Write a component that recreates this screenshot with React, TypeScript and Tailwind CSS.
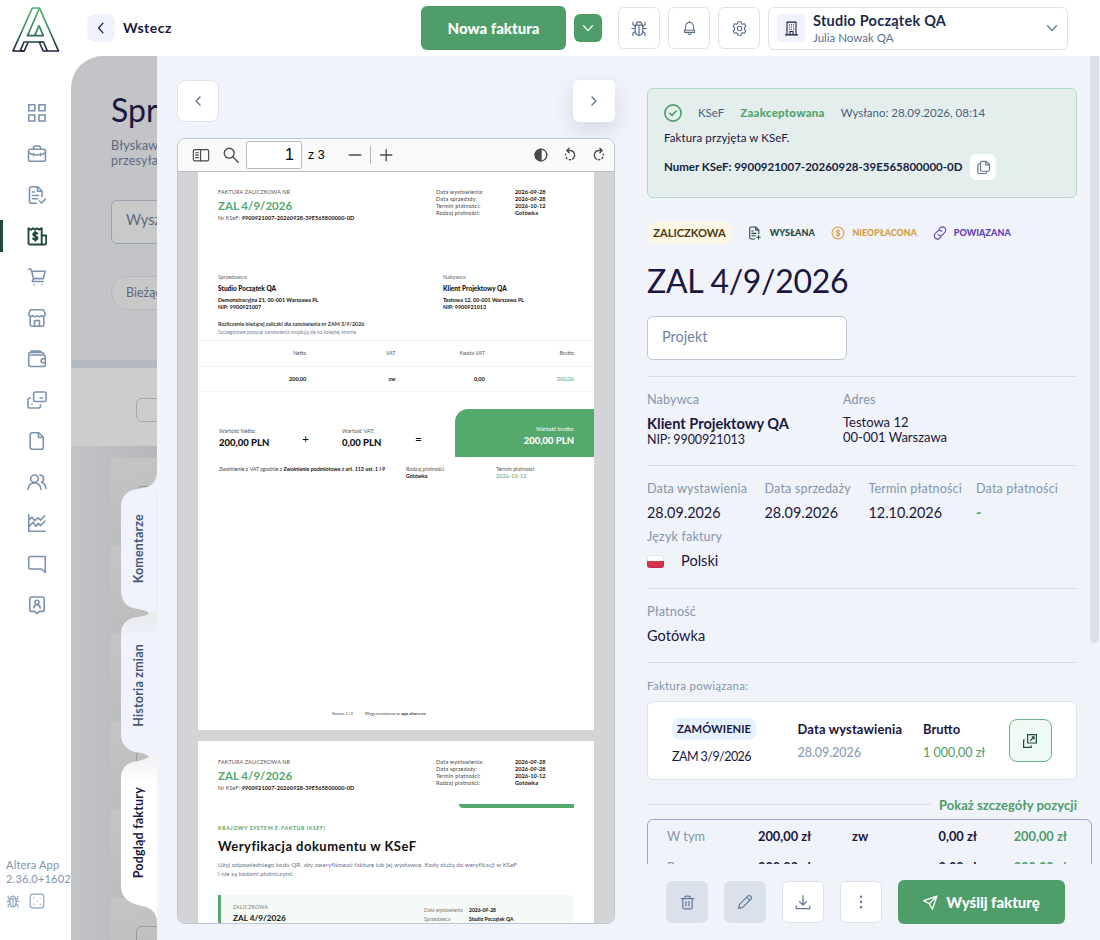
import type { ReactNode } from 'react';
import clsx from 'clsx';

interface IconProps {
  children: ReactNode;
  className?: string;
  strokeWidth?: number;
}

function Icon({ children, className = '', strokeWidth = 1.5 }: IconProps) {
  return (
    <svg
      className={clsx('shrink-0', className)}
      viewBox="0 0 20 20"
      fill="none"
      stroke="currentColor"
      strokeWidth={strokeWidth}
      strokeLinecap="round"
      strokeLinejoin="round"
    >
      {children}
    </svg>
  );
}

const bugPaths = (
  <>
    <path d="M6.2 7.2h7.6v5.3c0 2.8-1.6 4.8-3.8 4.8s-3.8-2-3.8-4.8z" />
    <path d="M7 7c.1-2 1.3-3.2 3-3.2S12.9 5 13 7M10 7.5V17M6 10.5H2.8M17.2 10.5H14M6.2 8.3 4 6.8V4M13.8 8.3 16 6.8V4M6.5 13.5 4 15v2.5M13.5 13.5 16 15v2.5" />
  </>
);

const navIcons: ReactNode[] = [
  <path key="dashboard" strokeLinejoin="miter" d="M1.8 1.8h6v6h-6zM12 1.8h6v6h-6zM1.8 12h6v6h-6zM12 12h6v6h-6z" />,
  <path key="briefcase" d="M3.5 5.2h13a2 2 0 0 1 2 2v8a2 2 0 0 1-2 2h-13a2 2 0 0 1-2-2v-8a2 2 0 0 1 2-2zM6.500 5V4a2 2 0 0 1 2-2h3a2 2 0 0 1 2 2v1M1.700 8.500c1.400 1.300 3 2 5 2.200M18.300 8.500c-1.400 1.300-3 2-5 2.200M8.500 10.700h3M6.700 9.500v2.300M13.300 9.500v2.300" />,
  <path key="doc-check" d="M9.500 18.200h-5a2 2 0 0 1-2-2V3.800a2 2 0 0 1 2-2h6.300L15 6v5.500M10.500 2v4.300H15M5.500 7h2M5.500 10.500h6M5.500 13.800h5M12.500 16l2 2 4-4" />,
  <g key="invoice">
    <path d="M1.500 2.200 4 3.700l2-1.500 2 1.500 2-1.500 2 1.500 2.700-1.500v16.300H3a1.500 1.500 0 0 1-1.500-1.500z" />
    <path d="M14.700 9.500h4.500v7.200a1.800 1.800 0 0 1-1.800 1.800h-2.700M10.300 7.600c-.5-.6-1.200-.8-2-.8-1.200 0-2.100.6-2.100 1.600 0 2.400 4.300 1.200 4.300 3.600 0 1-1 1.600-2.200 1.600-.9 0-1.700-.3-2.200-1M8.300 5.700v9" />
  </g>,
  <path key="cart" d="M1.500 2h2.200l1 2.300 1.800 7.300h9.800M4.700 4.300h13.500l-2 7.300M6.500 11.600l-1.300 2.900h11M7 17.800h.1M15 17.800h.1" />,
  <path key="store" d="M3.500 1.800h13l1.800 4.500a2.500 2.500 0 0 1-4.100 1.400 3 3 0 0 1-4.200 0 3 3 0 0 1-4.200 0A2.500 2.500 0 0 1 1.700 6.300zM3.200 8.500v8a1.700 1.700 0 0 0 1.700 1.700h10.200a1.700 1.700 0 0 0 1.700-1.700v-8M7.500 18v-5.500h5V18" />,
  <path key="wallet" d="M16.800 6v-.5a2 2 0 0 0-2-2H3.300A1.600 1.600 0 0 0 1.700 5v10.500a2 2 0 0 0 2 2h12.600a2 2 0 0 0 2-2V8a2 2 0 0 0-2-2H3.300M18.300 9.800h-2.200a2 2 0 0 0 0 4h2.200M14.300 3.500c0-.9-.7-1.500-1.500-1.500H4" />,
  <path key="cards" d="M8.200 2h9.300a1.600 1.600 0 0 1 1.600 1.600v6.300a1.600 1.600 0 0 1-1.600 1.600H8.200a1.600 1.600 0 0 1-1.600-1.600V3.600A1.600 1.600 0 0 1 8.200 2zM13 8h2.500M3.300 8H2.600A1.700 1.700 0 0 0 1 9.700v6.600A1.700 1.700 0 0 0 2.700 18h9a1.700 1.700 0 0 0 1.700-1.700v-1.500M4.800 14.300h.2" />,
  <path key="file" d="M5.200 1.800h6.600l4.500 4.400v10a2 2 0 0 1-2 2H5.200a2 2 0 0 1-2-2V3.800a2 2 0 0 1 2-2zM11.500 2v4.500h4.700" />,
  <path key="users" d="M7.500 3a3.800 3.800 0 1 1 0 7.600 3.800 3.800 0 0 1 0-7.600zM1 17.500c.4-4 3-6.500 6.500-6.500s6.100 2.500 6.500 6.500M13 3a3.800 3.800 0 0 1 1.500 7.200c2.500.8 4.200 3 4.500 6.300" />,
  <path key="chart" d="M1.800 1.800v16.400h16.400M2 13.500l4.200-4.300 2.500 4.200 2.700-3 2.100 2.200L18 8M2 6.800l3-2.600 2.800 3.500L11 4.800l2.500 2.400 4.300-4.400" />,
  <path key="chat" d="M18.300 18.500l-4-3.500H3.500a1.800 1.800 0 0 1-1.800-1.800V4.300a1.800 1.800 0 0 1 1.800-1.800h14.800z" />,
  <g key="contact">
    <path d="M4.500 2h11A1.700 1.700 0 0 1 17.200 3.700v11a1.700 1.700 0 0 1-1.700 1.700h-3.300L10 18.700l-2.200-2.300H4.500a1.700 1.700 0 0 1-1.700-1.700v-11A1.700 1.700 0 0 1 4.500 2z" />
    <path d="M10 5.300a2 2 0 1 1 0 4 2 2 0 0 1 0-4zM6.800 13c.3-2.200 1.500-3.400 3.200-3.400s2.900 1.200 3.200 3.400" />
  </g>,
];

const chevronDown = <path d="M4.500 7.2l5.500 6 5.500-6" />;

function Logo() {
  return (
    <svg className="h-[46px] w-12" viewBox="0 0 48 46" fill="none" strokeWidth="1.7" strokeLinejoin="round">
      <defs>
        <linearGradient id="logo" x1="0" y1="0" x2="0" y2="46" gradientUnits="userSpaceOnUse">
          <stop offset="0" stopColor="#55b070" />
          <stop offset=".5" stopColor="#3d8a63" />
          <stop offset=".75" stopColor="#1f4d45" />
          <stop offset="1" stopColor="#201a44" />
        </linearGradient>
      </defs>
      <g stroke="url(#logo)">
        <path d="M1 44 20.3 1h7.2L46.500 44H35.300l-3.800-9H16.200l-4 9z" />
        <path d="M27.500 1 15.500 28.700h15.800L27 18.700l-4.300 10M16.200 35h-5M31.500 35h-4.300l4 9h4.100M12.200 44l-4-.1L12 35" />
      </g>
    </svg>
  );
}

function Header() {
  return (
    <header className="flex h-14 shrink-0 items-center bg-white">
      <div className="mt-1 ml-3">
        <Logo />
      </div>
      <button className="ml-[27px] flex size-7 items-center justify-center rounded-lg bg-[#f0f3fb] text-[#1b1740]">
        <Icon className="size-4"><path d="M12.5 4 7 10l5.5 6" /></Icon>
      </button>
      <span className="ml-2 text-sm font-bold tracking-[0.5px]">Wstecz</span>
      <button className="ml-auto h-11 w-[145px] rounded-md bg-[#4f9d69] text-[15px] font-black text-white">
        Nowa faktura
      </button>
      <button className="ml-2 flex size-7 items-center justify-center rounded-md bg-[#4f9d69] text-white">
        <Icon className="size-4">{chevronDown}</Icon>
      </button>
      <div className="ml-4 flex gap-2 text-[#5b6f8f]">
        <button className="flex size-[42px] items-center justify-center rounded-md border border-[#dde2ea]">
          <Icon className="size-5" strokeWidth={1.2}>{bugPaths}</Icon>
        </button>
        <button className="flex size-[42px] items-center justify-center rounded-md border border-[#dde2ea]">
          <Icon className="size-[17px]" strokeWidth={1.3}>
            <path d="M10 2.8a4.700 4.700 0 0 0-4.700 4.700v3.200L4 12.800v1.700h12v-1.700l-1.300-2.100V7.500A4.700 4.700 0 0 0 10 2.800zM10 1.500v1.300M5 12h10M8 15c.2 1.500.9 2.300 2 2.300s1.800-.8 2-2.300" />
          </Icon>
        </button>
        <button className="flex size-[42px] items-center justify-center rounded-md border border-[#dde2ea]">
          <Icon className="size-[17px]" strokeWidth={1.3}>
            <path d="M8.300 2h3.400l.5 2.100 1.500.9 2.100-.7 1.700 3-1.600 1.500v2.400l1.600 1.500-1.700 3-2.100-.7-1.500.9-.5 2.100H8.300l-.5-2.100-1.500-.9-2.100.7-1.700-3 1.600-1.500V8.800L2.500 7.300l1.700-3 2.100.7 1.500-.9z" />
            <circle cx="10" cy="10" r="2.6" />
          </Icon>
        </button>
      </div>
      <button className="mr-8 ml-2 flex h-[43px] w-[300px] items-center rounded-md border border-[#dde2ea] pr-[7px] pl-2 text-left">
        <span className="flex size-7 items-center justify-center rounded bg-[#f0f3fb] text-[#1b1740]">
          <Icon className="size-[15px]" strokeWidth={1.4}>
            <path d="M2 18.500h16M4 18.500v-17h12v17M8 18.500V14h4v4.500M7.300 5h.1M10 5h.1M12.700 5h.1M7.300 8h.1M10 8h.1M12.700 8h.1M7.300 11h.1M10 11h.1M12.700 11h.1" />
          </Icon>
        </span>
        <span className="ml-2 flex flex-1 flex-col">
          <span className="text-[14.5px] leading-[18px] font-bold tracking-[0.25px] text-[#1c2b4a]">Studio Początek QA</span>
          <span className="text-[11.5px] leading-[15px] text-[#5b6f8f]">Julia Nowak QA</span>
        </span>
        <Icon className="size-4 text-[#5b6f8f]">{chevronDown}</Icon>
      </button>
    </header>
  );
}

function Sidebar() {
  return (
    <aside className="flex w-[71px] shrink-0 flex-col bg-white text-[#7c92b0]">
      <nav className="flex flex-col pt-9">
        {navIcons.map((icon, i) => (
          <div key={i} className={clsx('flex h-[41px] items-center', i === 3 && 'text-[#1f4a3f]')}>
            <span className={clsx('h-8 w-[3px]', i === 3 && 'bg-[#1f4a3f]')} />
            <Icon className="ml-6 size-5" strokeWidth={i === 3 ? 1.9 : 1.6}>{icon}</Icon>
          </div>
        ))}
      </nav>
      <div className="mt-auto pb-[31px] pl-1.5 text-[11px] leading-[14px] tracking-[0.2px] whitespace-nowrap">
        <p>Altera App</p>
        <p>2.36.0+1602</p>
        <div className="mt-[7px] -ml-px flex gap-2 text-[#8fa6c0]">
          <Icon className="size-4">{bugPaths}</Icon>
          <Icon className="size-4">
            <rect x="1.5" y="1.5" width="17" height="17" rx="3" />
            <path d="M6 6h.1M14 6h.1M10 10h.1M6 14h.1M14 14h.1" />
          </Icon>
        </div>
      </div>
    </aside>
  );
}

function Backdrop() {
  return (
    <div className="flex w-[86px] shrink-0 flex-col overflow-hidden rounded-tl-[32px] bg-[#c2c4c8]">
      <div className="flex h-[304px] w-[400px] shrink-0 flex-col items-start pl-10">
        <h1 className="mt-8 text-[32px] leading-[44px]">Sprzedaż</h1>
        <p className="mt-1.5 text-[12.5px] leading-[15px] tracking-[0.2px] text-[#5d6880]">
          Błyskawicznie
          <br />
          przesyłaj
        </p>
        <div className="mt-8 flex h-11 w-60 items-center rounded-md border border-[#9aa3b0] bg-[#c9c9ca] pb-1 pl-3.5 text-[14.5px] text-[#5d6880]">
          Wyszukaj
        </div>
        <div className="mt-8 flex h-[34px] w-60 items-center rounded-full border border-[#b5b8bc] bg-[#c8c8c8] pl-3.5 text-[12.5px] text-[#5d6880]">
          Bieżący
        </div>
      </div>
      <div className="h-2 w-[400px] shrink-0 rounded-full bg-[#b3b9be]" />
      <div className="h-[78px] shrink-0 bg-[#cdcdcc] pt-[30px] pl-[65px]">
        <div className="h-6 w-8 rounded-md border border-[#a4a8b5]" />
      </div>
      <div className="flex flex-1 flex-col gap-2 overflow-hidden bg-linear-to-r from-[#c2c4c8] to-[#b5b7ba] pt-3 pl-[39px]">
        {[1, 2, 3, 4, 5, 6].map((n) => (
          <div key={n} className="h-20 w-60 shrink-0 rounded-md bg-linear-to-br from-[#c5c5c5] to-[#b4b5b6] pt-7 pl-[26px]">
            <div className="h-6 w-8 rounded-md border border-[#9699a0]" />
          </div>
        ))}
      </div>
    </div>
  );
}

const tabs = [
  { label: 'Komentarze', height: 'h-[158px]', className: 'text-[#435777]' },
  { label: 'Historia zmian', height: 'h-[114px]', className: 'text-[#435777]' },
  { label: 'Podgląd faktury', height: 'h-[182px]', className: 'text-[#1b1740]' },
];

// Side tabs hang off the drawer's left edge, over the dimmed page
function DrawerTabs() {
  return (
    <div className="absolute top-[414px] -left-9 flex w-9 flex-col">
      <svg className="absolute inset-0 h-[455px] w-9" viewBox="0 0 36 455">
        <defs>
          <linearGradient id="tab-history" x1="0" y1="0" x2="0" y2="1">
            <stop offset=".03" stopColor="#e9ebef" />
            <stop offset=".2" stopColor="#f0f3fb" />
          </linearGradient>
          <linearGradient id="tab-preview" x1="0" y1="0" x2="0" y2="1">
            <stop offset=".03" stopColor="#f1f1f4" />
            <stop offset=".16" stopColor="#ffffff" />
          </linearGradient>
        </defs>
        <path fill="#f0f3fb" d="M36 0C36 12 31 17 19 18.5C7 19.5 0 26 0 36V121C0 131 6 138 17 139C23 140 26 141 28 143L36 145Z" />
        <path fill="url(#tab-history)" d="M36 141L28 143C25 146 22 146 17 147C6 148 0 154 0 164V264C0 274 6 281 17 282.5C23 283 26 285 28 286.5L36 288Z" />
        <path fill="url(#tab-preview)" d="M36 284L28 286.5C25 289 22 290 17 291C6 292 0 298 0 308V416C0 426 7 433 17 435C30 437 36 442 36 453Z" />
        <path stroke="#d5dce6" d="M36 19v120" />
      </svg>
      {tabs.map(({ label, height, className }) => (
        <div key={label} className={clsx('flex items-center justify-center', height)}>
          <span className={clsx('relative rotate-180 text-[12.5px] font-bold tracking-[0.2px] whitespace-nowrap [writing-mode:vertical-rl]', className)}>
            {label}
          </span>
        </div>
      ))}
    </div>
  );
}

const pdfDates = [
  ['Data wystawienia:', '2026-09-28'],
  ['Data sprzedaży:', '2026-09-28'],
  ['Termin płatności:', '2026-10-12'],
  ['Rodzaj płatności:', 'Gotówka'],
];

function PdfHeading() {
  return (
    <div className="flex h-[53px] pt-[17px] pl-5">
      <div className="w-[218px]">
        <p className="leading-[7px] tracking-[0.1px] text-[#555]">FAKTURA ZALICZKOWA NR</p>
        <p className="mt-[2.5px] text-[11.5px] leading-[13px] font-bold text-[#55a86b]">ZAL 4/9/2026</p>
        <p className="mt-[3px] leading-[7px] tracking-[0.1px]">
          <span className="text-[#555]">Nr KSeF: </span>
          <b>9900921007-20260928-39E565800000-0D</b>
        </p>
      </div>
      <div className="leading-[7px]">
        {pdfDates.map(([label, value]) => (
          <div key={label} className="flex">
            <span className="w-[79px] tracking-[0.2px] text-[#444]">{label}</span>
            <b className="tracking-[0.1px]">{value}</b>
          </div>
        ))}
      </div>
    </div>
  );
}

function PdfParty({ role, name, address, nip }: { role: string; name: string; address: string; nip: string }) {
  return (
    <div className="w-[225px] shrink-0 leading-[7px]">
      <p className="text-[5.4px] text-[#666]">{role}</p>
      <p className="mt-1 text-[6.5px] font-black">{name}</p>
      <p className="mt-[5px] text-[5.4px] font-bold">{address}</p>
      <p className="text-[5.4px] font-bold">{nip}</p>
    </div>
  );
}

function PdfPages() {
  return (
    <div className="flex flex-1 flex-col gap-[11px] overflow-hidden bg-[#d4d4d6] px-5 text-[5.5px] text-[#111]">
      <div className="flex h-[558px] shrink-0 flex-col bg-white">
        <PdfHeading />
        <div className="mt-[49px] flex pl-5">
          <PdfParty role="Sprzedawca:" name="Studio Początek QA" address="Demonstracyjna 21, 00-001 Warszawa PL" nip="NIP: 9900921007" />
          <PdfParty role="Nabywca:" name="Klient Projektowy QA" address="Testowa 12, 00-001 Warszawa PL" nip="NIP: 9900921013" />
        </div>
        <div className="mt-[9px] pl-5 text-[5.3px] leading-2">
          <p className="font-bold text-[#333]">Rozliczenie bieżącej zaliczki dla zamówienia nr ZAM 3/9/2026</p>
          <p className="text-[4.9px] text-[#7a8194]">Szczegółowe pozycje zamówienia znajdują się na kolejnej stronie</p>
        </div>
        <div className="mt-1 grid h-[26px] grid-cols-4 items-center border-t border-[#f3f3f6] pr-5 pl-[19px] text-right text-[5.2px] text-[#555]">
          <span>Netto</span>
          <span>VAT</span>
          <span>Kwota VAT</span>
          <span>Brutto</span>
        </div>
        <div className="grid h-[26px] grid-cols-4 items-center border-y border-[#f3f3f6] pr-5 pl-[19px] text-right font-bold">
          <span>200,00</span>
          <span>zw</span>
          <span>0,00</span>
          <span className="font-normal text-[#4f9d69]">200,00</span>
        </div>
        <div className="mt-[17px] flex h-12 pl-[21px]">
          <div className="w-[83px] pt-[19px]">
            <p className="leading-[7px] text-[#555]">Wartość Netto:</p>
            <p className="mt-[3px] text-[9.5px] leading-[9px] font-black">200,00 PLN</p>
          </div>
          <span className="w-10 pt-[23px] text-[12px] leading-[13px]">+</span>
          <div className="w-[73px] pt-[19px]">
            <p className="leading-[7px] text-[#555]">Wartość VAT:</p>
            <p className="mt-[3px] text-[9.5px] leading-[9px] font-black">0,00 PLN</p>
          </div>
          <span className="w-10 pt-[23px] text-[12px] leading-[13px]">=</span>
          <div className="flex-1 rounded-tl-[13px] bg-[#55a96c] pt-[17px] pr-5 text-right text-white">
            <p className="leading-[7px]">Wartość brutto:</p>
            <p className="mt-[3px] text-[9.5px] leading-[9px] font-black">200,00 PLN</p>
          </div>
        </div>
        <div className="mt-[9px] flex pl-[21px] text-[5.3px] leading-[7px] whitespace-nowrap">
          <p className="w-[187px]">
            <span className="text-[#444]">Zwolnienie z VAT zgodnie z </span>
            <b>Zwolnienie podmiotowe z art. 113 ust. 1 i 9</b>
          </p>
          <div className="w-[90px]">
            <p className="text-[#555]">Rodzaj płatności</p>
            <b>Gotówka</b>
          </div>
          <div>
            <p className="text-[#555]">Termin płatności</p>
            <p className="tracking-[0.2px] text-[#4f9d69]">2026-10-12</p>
          </div>
        </div>
        <div className="mt-auto flex gap-3 pb-[13px] pl-[134px] text-[4.4px] leading-[6px] text-[#444]">
          <span>Strona 1/3</span>
          <span>
            Wygenerowano w <b>app.altera.co</b>
          </span>
        </div>
      </div>

      <div className="h-[400px] shrink-0 bg-white pt-px">
        <PdfHeading />
        <div className="mt-[9px] mr-5 ml-[261px] h-1 rounded-bl bg-[#55a96c]" />
        <p className="mt-4 pl-5 text-[5.3px] leading-2 font-bold tracking-[0.55px] text-[#4f9d69]">KRAJOWY SYSTEM E-FAKTUR (KSEF)</p>
        <h2 className="mt-[5.5px] pl-5 text-[13px] leading-4 font-bold tracking-[0.48px]">Weryfikacja dokumentu w KSeF</h2>
        <p className="mt-1.5 pl-5 text-[6.2px] leading-[9px] tracking-[0.06px] text-[#6c738a]">
          Użyj odpowiedniego kodu QR, aby zweryfikować fakturę lub jej wystawcę. Kody służą do weryfikacji w KSeF
          <br />i nie są kodami płatniczymi.
        </p>
        <div className="mt-[17.5px] mr-5 ml-5 flex h-[100px] rounded-tr-md border-l-[3px] border-[#55a96c] bg-[#f5faf6] pt-[9px] pl-3 text-[5px]">
          <div className="w-[191px]">
            <p className="leading-[7px] tracking-[0.3px] text-[#777]">ZALICZKOWA</p>
            <p className="mt-[3px] text-[8.2px] leading-[9px] font-bold">ZAL 4/9/2026</p>
          </div>
          <div className="pt-0.5 leading-[9px]">
            <p className="flex">
              <span className="w-[45px] text-[#777]">Data wystawienia</span>
              <b>2026-09-28</b>
            </p>
            <p className="flex">
              <span className="w-[45px] text-[#777]">Sprzedawca</span>
              <b>Studio Początek QA</b>
            </p>
          </div>
        </div>
      </div>
    </div>
  );
}

function PdfToolbar() {
  return (
    <div className="flex h-[33px] shrink-0 items-center border-b border-[#b9bdc4] bg-[#f9f9fa] text-[#4a4a4d]">
      <Icon className="ml-[14px] size-[18px]" strokeWidth={1.3}>
        <rect x="1.5" y="4" width="17" height="12.5" rx="1.5" />
        <path d="M9.5 4v12.5M4 7.5h3M4 10.2h3M4 13h3" />
      </Icon>
      <Icon className="ml-3 size-[18px]">
        <circle cx="8" cy="8" r="5.5" />
        <path d="M12 12l6 6" />
      </Icon>
      <div className="ml-1.5 flex h-7 w-14 items-center justify-end rounded-xs border border-[#bbb] bg-white pr-[7px] font-['Liberation_Sans'] text-base text-black">
        1
      </div>
      <span className="ml-1.5 font-['Liberation_Sans'] text-[12.5px] text-black">z 3</span>
      <Icon className="ml-[21px] size-[18px]" strokeWidth={1.4}><path d="M3.5 10h13" /></Icon>
      <div className="ml-1.5 h-[18px] w-px bg-[#b5b5b5]" />
      <Icon className="ml-1.5 size-[18px]" strokeWidth={1.5}><path d="M4 10h12.500M10.200 4v12.500" /></Icon>
      <Icon className="ml-auto size-[18px]">
        <circle cx="10" cy="10" r="6.5" />
        <path fill="currentColor" d="M10 3.5a6.500 6.500 0 0 0 0 13z" />
      </Icon>
      <Icon className="ml-[11px] size-[18px]">
        <path d="M9 2.5 6.500 5 9 7.500M6.800 5H10a5.200 5.200 0 0 1 2.500 9.700" />
        <path strokeDasharray="1.5 2.6" d="M10.500 15.300A5.200 5.200 0 0 1 5.200 9" />
      </Icon>
      <Icon className="mr-1.5 ml-[11px] size-[18px]">
        <path d="M11 2.5 13.500 5 11 7.500M13.200 5H10a5.200 5.200 0 0 0-2.500 9.700" />
        <path strokeDasharray="1.5 2.6" d="M9.500 15.300A5.200 5.200 0 0 0 14.800 9" />
      </Icon>
    </div>
  );
}

function Preview() {
  return (
    <section className="flex w-[438px] shrink-0 flex-col pt-6 pb-4">
      <div className="flex justify-between text-[#64748b]">
        <button className="flex size-[42px] items-center justify-center rounded-lg border border-[#dde2ea] bg-white">
          <Icon className="size-4" strokeWidth={1.7}><path d="M12.5 5 7.500 10l5 5" /></Icon>
        </button>
        <button className="flex size-[42px] items-center justify-center rounded-md bg-white shadow-[0_8px_20px_rgba(60,70,100,0.15)]">
          <Icon className="size-4" strokeWidth={1.7}><path d="M7.5 5l5 5-5 5" /></Icon>
        </button>
      </div>
      <div className="mt-4 flex flex-1 flex-col overflow-hidden rounded-lg border border-[#bcc8d6]">
        <PdfToolbar />
        <PdfPages />
      </div>
    </section>
  );
}

function Label({ children }: { children: ReactNode }) {
  return <p className="-mt-px mb-px text-[12.6px] leading-4 tracking-[0.15px] text-[#8296af]">{children}</p>;
}

const dates = [
  { label: 'Data wystawienia', value: '28.09.2026', width: 'w-[101.5px]' },
  { label: 'Data sprzedaży', value: '28.09.2026', width: 'w-[88px]' },
  { label: 'Termin płatności', value: '12.10.2026', width: 'w-[91.5px]' },
  { label: 'Data płatności', value: '-', width: 'w-[90px]' },
];

const totals = [
  { label: 'W tym', net: '200,00 zł', rate: 'zw', vat: '0,00 zł', gross: '200,00 zł' },
  { label: 'Razem', net: '200,00 zł', rate: '', vat: '0,00 zł', gross: '200,00 zł' },
];

function Details() {
  return (
    <div className="flex min-h-0 flex-1 flex-col overflow-hidden">
      <div className="w-[430px] shrink-0">
        <div className="mt-8 h-[110px] rounded-md border border-[#b5d8c8] bg-[#e4eeed] px-4 pt-[14px]">
          <div className="flex h-[19px] items-center gap-4 text-[11.5px] text-[#4a5f80]">
            <Icon className="size-[18px] text-[#4f9d69]" strokeWidth={1.8}>
              <circle cx="10" cy="10" r="9" />
              <path d="M6.5 10.300l2.500 2.300 4.500-4.800" />
            </Icon>
            <span>KSeF</span>
            <span className="font-black tracking-[0.25px] text-[#4fa56c]">Zaakceptowana</span>
            <span>Wysłano: 28.09.2026, 08:14</span>
          </div>
          <p className="mt-[9px] text-[11.5px] leading-[14px] tracking-[0.1px] text-[#1b1740]">Faktura przyjęta w KSeF.</p>
          <div className="mt-[9px] flex items-center">
            <span className="text-[11.5px] font-bold text-[#16233f]">Numer KSeF: 9900921007-20260928-39E565800000-0D</span>
            <button className="ml-2 flex size-[26px] items-center justify-center rounded-md bg-white text-[#64789a]">
              <Icon className="size-[15px]" strokeWidth={1.6}>
                <path d="M8 1.800h5.500L18 6v7a2 2 0 0 1-2 2H8a2 2 0 0 1-2-2V3.800a2 2 0 0 1 2-2zM13 2v4.500h4.800M6 5H4.500a2 2 0 0 0-2 2v9a2 2 0 0 0 2 2H12a2 2 0 0 0 2-2v-1" />
              </Icon>
            </button>
          </div>
        </div>

        <div className="mt-6 flex h-[22px] items-center text-[9px] font-black tracking-[0.1px]">
          <span className="flex h-[22px] w-[85px] items-center justify-center rounded-lg bg-[#fdf8e6] text-[11.2px] font-bold tracking-[-0.05px] text-[#4a3a10]">
            ZALICZKOWA
          </span>
          <span className="ml-4 flex w-[67px] items-center justify-between text-[#1f4a3f]">
            <Icon className="size-[14px]">
              <path d="M9.5 18.500h-5a2 2 0 0 1-2-2v-13a2 2 0 0 1 2-2h6.800L15.500 6v5M11 1.800V6h4.500M5.500 7h2M5.500 10.500h6M5.500 14h5M15 13.500v5M12.500 16h5" />
            </Icon>
            WYSŁANA
          </span>
          <span className="ml-4 flex w-[86px] items-center justify-between text-[8.8px] text-[#db9a3c]">
            <Icon className="size-[14px]">
              <circle cx="10" cy="10" r="8.5" />
              <path d="M12.3 7.500c-.5-.8-1.300-1.200-2.300-1.200-1.400 0-2.300.7-2.300 1.700 0 2.600 4.800 1.300 4.800 4 0 1.100-1.100 1.800-2.500 1.800-1.100 0-2-.4-2.500-1.200M10 4.800v10.400" />
            </Icon>
            NIEOPŁACONA
          </span>
          <span className="ml-4 flex w-[78px] items-center justify-between text-[#6540b5]">
            <Icon className="size-[14px]">
              <path d="M8.5 4.500l1.800-1.800a4.400 4.400 0 0 1 6.500 0 4.500 4.500 0 0 1 0 6.500l-3 3a4.400 4.400 0 0 1-6.200.2M11.500 15.500l-1.800 1.800a4.400 4.400 0 0 1-6.500 0 4.500 4.500 0 0 1 0-6.500l3-3a4.400 4.400 0 0 1 6.200-.2" />
            </Icon>
            POWIĄZANA
          </span>
        </div>

        <h1 className="mt-[17px] text-[32px] leading-10 tracking-[-0.3px]">ZAL 4/9/2026</h1>
        <div className="mt-[15px] flex h-11 w-[200px] items-center rounded-md border border-[#bcc8d6] bg-white px-3.5 pb-0.5 text-[14.5px] text-[#6f84a2]">
          Projekt
        </div>

        <div className="mt-4 flex h-[89px] border-t border-[#d8dee8] pt-4">
          <div className="w-[196px]">
            <Label>Nabywca</Label>
            <p className="mt-[7px] text-[14.6px] leading-[18px] font-bold">Klient Projektowy QA</p>
            <p className="text-[12.5px] leading-[14px] tracking-[-0.1px]">NIP: 9900921013</p>
          </div>
          <div>
            <Label>Adres</Label>
            <p className="mt-[7px] text-[13px] leading-[15px]">
              Testowa 12
              <br />
              00-001 Warszawa
            </p>
          </div>
        </div>

        <div className="h-[123px] border-t border-[#d8dee8] pt-4">
          <div className="flex gap-4 whitespace-nowrap">
            {dates.map(({ label, value, width }) => (
              <div key={label} className={width}>
                <Label>{label}</Label>
                <p className={clsx('mt-[7px] text-[14.4px] leading-[18px]', value === '-' && 'font-bold text-[#4f9d69]')}>{value}</p>
              </div>
            ))}
          </div>
          <div className="mt-2">
            <Label>Język faktury</Label>
            <div className="mt-[7px] flex items-center text-[14.6px] leading-[18px]">
              <span className="h-[13px] w-[17px] rounded-[3px] border border-black/10 bg-linear-to-b from-white from-45% to-[#d43348] to-50% bg-origin-border" />
              <span className="ml-[17px]">Polski</span>
            </div>
          </div>
        </div>

        <div className="h-[74px] border-t border-[#d8dee8] pt-4">
          <Label>Płatność</Label>
          <p className="mt-[7px] text-[14.6px] leading-[18px]">Gotówka</p>
        </div>

        <div className="border-t border-[#d8dee8] pt-4">
          <p className="text-[11.5px] leading-[14px] tracking-[0.25px] text-[#8296af]">Faktura powiązana:</p>
          <div className="mt-2 flex h-[79px] rounded-md border border-[#dde2ea] bg-white pl-6 text-[13px] leading-4">
            <div className="w-[125.5px] pt-4">
              <span className="flex h-[22px] w-[84px] items-center justify-center rounded-lg bg-[#e6f2fd] text-[11.2px] font-bold">
                ZAMÓWIENIE
              </span>
              <p className="mt-[9px] text-[12.5px] tracking-[-0.55px]">ZAM 3/9/2026</p>
            </div>
            <div className="w-[125.5px] pt-[19px]">
              <p className="font-bold tracking-[0.12px]">Data wystawienia</p>
              <p className="mt-2 text-[12.5px] tracking-[-0.05px] text-[#8296af]">28.09.2026</p>
            </div>
            <div className="w-[86px] pt-[19px]">
              <p className="font-bold">Brutto</p>
              <p className="mt-2 text-[12.6px] tracking-[-0.05px] text-[#4f9d69]">1 000,00 zł</p>
            </div>
            <button className="mt-[17px] flex h-[43px] w-[42.5px] items-center justify-center rounded-lg border border-[#6db08a] bg-[#effaf4] text-[#1f4a3f]">
              <Icon className="size-4">
                <path strokeLinecap="butt" strokeLinejoin="miter" d="M7 2h11v10.500H7zM10 9.800l4.800-4.800M12 4.800h3V8M3.500 9H2v9h9.500v-2.500" />
              </Icon>
            </button>
          </div>
        </div>

        <div className="mt-[18px] flex h-4 items-center gap-2">
          <div className="mb-1 h-px flex-1 bg-[#d5deea]" />
          <span className="text-[13px] font-bold tracking-[0.05px] text-[#4f9d69]">Pokaż szczegóły pozycji</span>
        </div>
      </div>

      <div className="mt-[5px] w-[445px] shrink-0 rounded-t-md border border-[#97a9c0] pt-px text-[12.8px] font-bold">
        {totals.map((row) => (
          <div key={row.label} className="flex h-[31px] items-center pr-6 pl-[19px]">
            <span className="w-[91px] font-normal text-[#8296af]">{row.label}</span>
            <span className="w-[94px]">{row.net}</span>
            <span className="flex-1">{row.rate}</span>
            <span className="w-[60px] text-right">{row.vat}</span>
            <span className="w-[90px] text-right text-[#4f9d69]">{row.gross}</span>
          </div>
        ))}
      </div>
    </div>
  );
}

function Actions() {
  return (
    <div className="flex h-[76px] shrink-0 items-center gap-4 pl-[19px] text-[#64789a]">
      <button className="flex size-[42px] items-center justify-center rounded-md bg-[#dbe1eb]">
        <Icon className="size-[15px]" strokeWidth={1.6}>
          <path d="M1.5 4.800h17M3.800 5v11.500a2 2 0 0 0 2 2h8.400a2 2 0 0 0 2-2V5M6.500 4.500V3.200a1.700 1.700 0 0 1 1.700-1.700h3.600a1.700 1.700 0 0 1 1.700 1.700v1.300M8 8.500v6M12 8.500v6" />
        </Icon>
      </button>
      <button className="flex size-[42px] items-center justify-center rounded-md bg-[#dbe1eb]">
        <Icon className="size-4">
          <path d="M2 18l1.200-5L13.500 2.700a2.500 2.500 0 0 1 3.600 0l.2.200a2.500 2.500 0 0 1 0 3.600L7 16.800zM12 4.300l3.700 3.700" />
        </Icon>
      </button>
      <button className="flex size-[42px] items-center justify-center rounded-md border border-[#dde2ea] bg-white">
        <Icon className="size-4" strokeWidth={1.6}><path d="M10 2v11.500M5.500 9.500l4.500 4.300 4.500-4.300M1.500 15v3.200h17V15" /></Icon>
      </button>
      <button className="flex size-[42px] items-center justify-center rounded-md border border-[#dde2ea] bg-white">
        <Icon className="size-4" strokeWidth={3}><path d="M10 3.500h.1M10 10h.1M10 16.500h.1" /></Icon>
      </button>
      <button className="flex h-11 w-[167px] items-center justify-center gap-2 rounded-md bg-[#4f9d69] text-[15px] font-black tracking-[-0.05px] text-white">
        <Icon className="size-[15px]" strokeWidth={1.8}>
          <path d="M18.5 1.500 1 7.500l7.300 4.200 4.200 7.300zM18.500 1.500 8.300 11.700" />
        </Icon>
        Wyślij fakturę
      </button>
    </div>
  );
}

export default function App() {
  return (
    <div className="flex h-[940px] w-[1100px] flex-col overflow-hidden bg-white font-['Lato',sans-serif] text-[#1b1740]">
      <Header />
      <div className="flex min-h-0 flex-1">
        <Sidebar />
        <Backdrop />
        <main className="relative flex flex-1 bg-[#f0f3f9] pl-5">
          <DrawerTabs />
          <Preview />
          <section className="ml-8 flex w-[453px] shrink-0 flex-col">
            <Details />
            <Actions />
          </section>
          <div className="absolute top-0 right-px h-[587px] w-[9px] rounded-b-full bg-[#dae0ea]" />
        </main>
      </div>
    </div>
  );
}
